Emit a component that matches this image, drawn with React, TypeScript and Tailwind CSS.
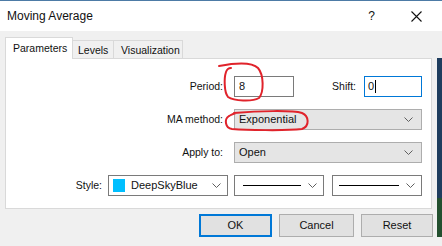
import React from "react";

const Chevron = () => (
  <svg width="9" height="5" viewBox="0 0 9 5" className="shrink-0">
    <path d="M0.5 0.5 L4.5 4.5 L8.5 0.5" fill="none" stroke="#5f5f5f" strokeWidth="1" />
  </svg>
);

export default function App() {
  const font = { fontFamily: '"Liberation Sans", Arial, sans-serif' };
  return (
    <div
      className="relative w-[442px] h-[246px] overflow-hidden bg-[#f0f0f0] text-[10.5px] text-[#111] leading-none"
      style={font}
    >
      {/* title bar */}
      <div className="h-[31px] bg-white border-t border-[#4d7ba6] flex items-center justify-between pl-[7px] pr-[20px]">
        <span className="text-[12px]">Moving Average</span>
        <div className="flex items-center gap-[36px]">
          <span className="text-[12px]">?</span>
          <svg width="11" height="11" viewBox="0 0 11 11">
            <path d="M0.5 0.5 L10.5 10.5 M10.5 0.5 L0.5 10.5" stroke="#111" strokeWidth="1.1" />
          </svg>
        </div>
      </div>

      <div className="flex">
        <div className="w-[437px] pl-[5px] pt-[6px]">
          {/* tabs */}
          <div className="flex items-end h-[21px] relative z-10 text-[10.5px]">
            <div className="h-[22px] w-[68px] bg-white border border-b-0 border-[#d9d9d9] flex items-center pl-[7px] -mb-[1px]">
              Parameters
            </div>
            <div className="h-[18px] w-[41px] bg-[#f0f0f0] border border-l-0 border-b-0 border-[#d9d9d9] flex items-center pl-[5px] pt-[1px]">
              Levels
            </div>
            <div className="h-[18px] w-[69px] bg-[#f0f0f0] border border-l-0 border-b-0 border-[#d9d9d9] flex items-center pl-[7px] pt-[1px]">
              Visualization
            </div>
          </div>

          {/* panel */}
          <div className="w-[427px] h-[151px] bg-white border border-[#d9d9d9] pt-[17px] flex flex-col gap-[12px]">
            {/* Period row */}
            <div className="flex items-center h-[21px]">
              <div className="w-[217px] text-right">Period:</div>
              <div className="ml-[11px] w-[60px] h-[21px] border border-[#7a7a7a] bg-white flex items-center pl-[4px] text-[11px]">
                8
              </div>
              <div className="w-[62px] text-right">Shift:</div>
              <div className="ml-[8px] w-[58px] h-[21px] border border-[#0078d7] bg-white flex items-center pl-[3px] text-[11px]">
                0<span className="inline-block w-[1px] h-[13px] bg-black ml-[1px]" />
              </div>
            </div>

            {/* MA method */}
            <div className="flex items-center h-[21px]">
              <div className="w-[217px] text-right">MA method:</div>
              <div className="ml-[11px] w-[188px] h-[21px] border border-[#adadad] bg-[#e5e5e5] flex items-center justify-between pl-[4px] pr-[8px] text-[11px]">
                <span>Exponential</span>
                <Chevron />
              </div>
            </div>

            {/* Apply to */}
            <div className="flex items-center h-[21px]">
              <div className="w-[217px] text-right">Apply to:</div>
              <div className="ml-[11px] w-[188px] h-[21px] border border-[#adadad] bg-[#e5e5e5] flex items-center justify-between pl-[4px] pr-[8px] text-[11px]">
                <span>Open</span>
                <Chevron />
              </div>
            </div>

            {/* Style */}
            <div className="flex items-center h-[21px]">
              <div className="w-[96px] text-right">Style:</div>
              <div className="ml-[6px] w-[120px] h-[21px] border border-[#7a7a7a] bg-white flex items-center pl-[4px] pr-[6px] text-[11px]">
                <span className="w-[12px] h-[13px] bg-[#00bfff] shrink-0" />
                <span className="ml-[6px] flex-1">DeepSkyBlue</span>
                <Chevron />
              </div>
              <div className="ml-[6px] w-[90px] h-[21px] border border-[#7a7a7a] bg-white flex items-center pl-[8px] pr-[6px]">
                <span className="w-[58px] h-[1px] bg-black" />
                <span className="flex-1" />
                <Chevron />
              </div>
              <div className="ml-[8px] w-[90px] h-[21px] border border-[#7a7a7a] bg-white flex items-center pl-[6px] pr-[6px]">
                <span className="w-[60px] h-[1px] bg-black" />
                <span className="flex-1" />
                <Chevron />
              </div>
            </div>
          </div>

          {/* buttons */}
          <div className="flex justify-end gap-[7px] pr-[4px] pt-[5px] text-[11px]">
            <button className="w-[73px] h-[23px] bg-[#e1e1e1] border-2 border-[#0078d7] flex items-center justify-center">
              OK
            </button>
            <button className="w-[75px] h-[23px] bg-[#e1e1e1] border border-[#adadad] flex items-center justify-center">
              Cancel
            </button>
            <button className="w-[72px] h-[23px] bg-[#e1e1e1] border border-[#adadad] flex items-center justify-center">
              Reset
            </button>
          </div>
        </div>

        {/* right edge of window behind */}
        <div className="w-[5px] flex flex-col mt-[27px]">
          <div className="h-[140px] bg-[#1f3d5e]" />
          <div className="flex-1 h-[50px] bg-[#23502f]" />
        </div>
      </div>

      {/* red hand-drawn annotations */}
      <svg className="absolute left-0 top-0 pointer-events-none" width="442" height="246" viewBox="0 0 442 246">
        <path
          d="M 219 66 C 235 63, 252 62, 258 68 C 264 75, 264 92, 259 98 C 252 102, 234 101, 228 97 C 224 92, 224 78, 226 72 C 227 69, 229 68, 231 68"
          fill="none"
          stroke="#e0232b"
          strokeWidth="2"
          strokeLinecap="round"
        />
        <path
          d="M 234 113 C 258 111, 292 110, 302 113 C 309 116, 310 126, 302 129 C 285 131, 245 130, 232 129 C 225 128, 224 119, 229 116 C 231 115, 232 114, 236 113"
          fill="none"
          stroke="#e0232b"
          strokeWidth="2"
          strokeLinecap="round"
        />
      </svg>
    </div>
  );
}
